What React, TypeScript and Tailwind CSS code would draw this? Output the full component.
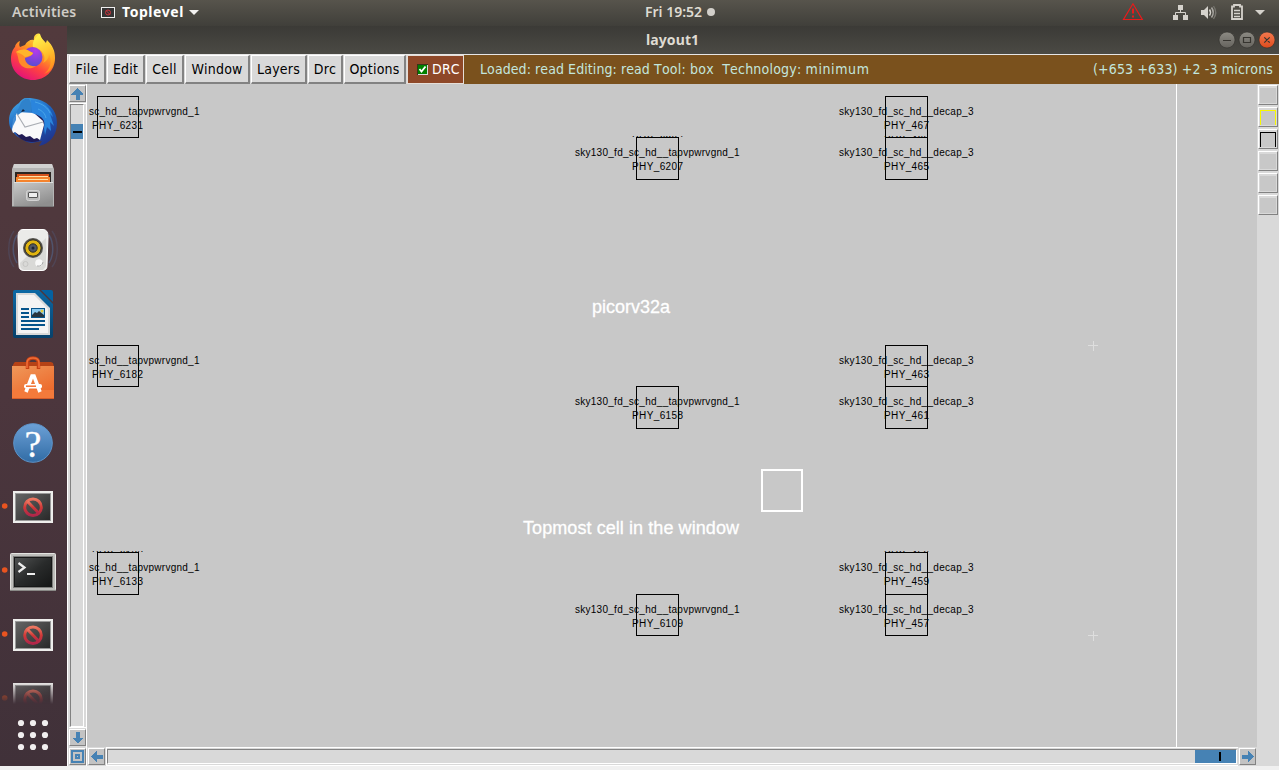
import React from "react";

type Cell = { x: number; y: number; h?: number; name: string; id: string; nameX: number; idX: number; nameW: number };

const TAP = "sky130_fd_sc_hd__tapvpwrvgnd_1";
const DECAP = "sky130_fd_sc_hd__decap_3";

const tap = (y: number, id: string, h = 42): Cell => ({ x: 636, y, h, name: TAP, id, nameX: 575, idX: 632, nameW: 164.5 });
const edge = (y: number, id: string, h = 41): Cell => ({ x: 97, y, h, name: "sc_hd__tapvpwrvgnd_1", id, nameX: 89, idX: 92, nameW: 110.5 });
const decap = (y: number, id: string, h = 41): Cell => ({ x: 885, y, h, name: DECAP, id, nameX: 839, idX: 884, nameW: 134.5 });

const cells: Cell[] = [
  edge(96, "PHY_6231"),
  edge(345, "PHY_6182"),
  edge(552, "PHY_6133", 42),
  tap(137, "PHY_6207"),
  tap(386, "PHY_6158"),
  tap(594, "PHY_6109", 41),
  decap(96, "PHY_467"),
  decap(137, "PHY_465", 42),
  decap(345, "PHY_463"),
  decap(386, "PHY_461", 42),
  decap(552, "PHY_459", 42),
  decap(594, "PHY_457"),
];

const clipped = [
  { x: 632, y: 136, w: 51, id: "PHY_6207" },
  { x: 884, y: 136, w: 45, id: "PHY_465" },
  { x: 92, y: 551, w: 51, id: "PHY_6133" },
  { x: 884, y: 551, w: 45, id: "PHY_459" },
];

function LayoutCanvas() {
  return (
    <svg className="block h-[663px] w-[1170px] bg-[#c8c8c8]" viewBox="87 84 1170 663">
      <g shapeRendering="crispEdges" fill="none" stroke="#000">
        {cells.map((c, i) => (
          <rect key={i} x={c.x + 0.5} y={c.y + 0.5} width={c.x === 97 ? 41 : 42} height={c.h} />
        ))}
      </g>
      <g fontFamily="Liberation Sans, Arial, sans-serif" fontSize="10" fill="#000">
        {cells.map((c, i) => (
          <React.Fragment key={i}>
            <text x={c.nameX} y={c.y + 19} textLength={c.nameW}>{c.name}</text>
            <text x={c.idX} y={c.y + 33} textLength={c.id.length === 8 ? 51 : 45}>{c.id}</text>
          </React.Fragment>
        ))}
        {clipped.map((c, i) => (
          <svg key={i} x={c.x} y={c.y} width={c.w} height="1">
            <text x="0" y="7" textLength={c.w}>{c.id}</text>
          </svg>
        ))}
      </g>
      <g shapeRendering="crispEdges">
        <rect x="1176" y="84" width="1" height="663" fill="#fff" />
        <rect x="762" y="470" width="40" height="41" fill="none" stroke="#fff" strokeWidth="2" />
        <path d="M1088 345.5h10M1093.5 341v10M1088 635.5h10M1093.5 631v10" stroke="#dedede" />
      </g>
      <g fontFamily="Liberation Sans, Arial, sans-serif" fontSize="18" fill="#fff" stroke="#fff" strokeWidth=".3">
        <text x="592" y="313" textLength="78">picorv32a</text>
        <text x="523" y="534" textLength="216">Topmost cell in the window</text>
      </g>
    </svg>
  );
}

const iconClass = "block h-16 w-[67px] shrink-0";

function Firefox() {
  return (
    <svg className={iconClass} viewBox="0 0 67 64">
      <defs>
        <linearGradient id="ffBody" x1=".8" y1=".1" x2=".3" y2="1">
          <stop offset="0" stopColor="#ffe645" /><stop offset=".35" stopColor="#ff9a22" />
          <stop offset=".65" stopColor="#ff4340" /><stop offset="1" stopColor="#e3107b" />
        </linearGradient>
        <linearGradient id="ffTail" x1=".3" y1="0" x2=".6" y2="1">
          <stop offset="0" stopColor="#fff44f" /><stop offset=".5" stopColor="#ffc52e" /><stop offset="1" stopColor="#ff8a1b" />
        </linearGradient>
        <radialGradient id="ffGlobe" cx=".65" cy=".2" r=".9">
          <stop offset="0" stopColor="#b33bea" /><stop offset=".5" stopColor="#8043da" /><stop offset="1" stopColor="#4a52cc" />
        </radialGradient>
      </defs>
      <path d="M20 15c-1 3-1 4 0 6l5-2c2-4 6-6 9-5-1-3 2-8 6-6 0 3 2 5 6 9l1-3c6 6 8 11 8 18 0 13-10 22-22 22S11 45 11 33c0-6 2-10 4-12 0-2 2-5 5-6Z" fill="url(#ffBody)" />
      <path d="M40 8c-5 3-8 8-7 13 10 2 14 10 10 16 4-2 6-5 6-9 4 7 1 16-5 20 9-3 11-12 10-20-1-5-3-9-7-13l-1 4c-1-4-5-6-6-11Z" fill="url(#ffTail)" />
      <circle cx="32.500" cy="31" r="10" fill="url(#ffGlobe)" />
      <path d="M16 26c5-3 10-3 13-1l4 2c-1 3-5 4-8 5 0 5 5 9 11 8-5 4-14 3-17-4-1-4-1-7-3-10Z" fill="#ff8a2a" />
      <path d="M16 26c5-3 10-3 13-1l4 2c-1 3-5 3-8 4-3-3-6-4-9-5Z" fill="#ffb52b" />
    </svg>
  );
}

function Thunderbird() {
  return (
    <svg className={iconClass} viewBox="0 0 67 64">
      <defs>
        <linearGradient id="tbBody" x1=".2" y1="0" x2=".8" y2="1">
          <stop offset="0" stopColor="#41a6e8" /><stop offset=".45" stopColor="#1c62bd" /><stop offset="1" stopColor="#203088" />
        </linearGradient>
      </defs>
      <path d="M27 8c18 0 30 10 30 25 0 13-8 21-18 23l3-5-10 2c-5 0-10-4-14-6C13 43 9 38 9 31c0-9 4-14 10-18 2-3 4-5 8-5Z" fill="url(#tbBody)" />
      <path d="M18 23c-6 9-6 16 0 23 5 6 13 7 21 5l5-14 1-13Z" fill="#211b55" />
      <path d="m17 22 17 1 9 8 1 4-4 15-3-2-3 1-4-3-4 1-4-3-3 1-4-3-2 1-1-3c1-7 2-12 5-17Z" fill="#f9f9fa" />
      <path d="m17 24 8 13 18-5" fill="none" stroke="#a9adb3" strokeWidth="1.1" />
      <path d="M19 18c2-8 6-10 10-9 3 5 3 9 2 13-5-3-8-1-13 3-2-2-1-5 1-7Z" fill="#2f82cb" />
      <path d="M31 10c13 1 20 8 22 17l-3-3 4 12-4-4 1 9-4-4-2 8-1-7c2-7-1-12-12-15Z" fill="#2a85dd" />
      <path d="M35 12c8 2 13 6 15 11M38 19c5 2 7 5 8 9" stroke="#5db9ef" fill="none" opacity=".6" />
      <path d="m21 22 2-3 2 2Z" fill="#142039" /><path d="m16 25-3 4-1 9 4-8Z" fill="#438dd4" />
    </svg>
  );
}

function Files() {
  return (
    <svg className={iconClass} viewBox="0 0 67 64">
      <defs><linearGradient id="cab" x1="0" y1="0" x2=".5" y2="1"><stop stopColor="#c9c9c9" /><stop offset="1" stopColor="#8f8f8f" /></linearGradient></defs>
      <path d="M14 10h38l2 5v37H12V15Z" fill="#b5b5b5" />
      <path d="M14 10h38l1 4H13Z" fill="#d1d1d1" />
      <path d="M15 18h36v10H15Z" fill="#2c2522" />
      <path d="M17 20h32v8H17Z" fill="#d4521c" /><path d="M16 23h34v5H16Z" fill="#f5832d" /><path d="M19 22.5h29M18 25.5h30" stroke="#ffe0a8" />
      <path d="M14 28h39v25H14Z" fill="url(#cab)" />
      <path d="M14 28.5h39" stroke="#ddd" />
      <rect x="26.5" y="36.5" width="13" height="10" rx="2" fill="#bababa" stroke="#d4d4d4" />
      <rect x="28.5" y="38.5" width="9" height="5" rx=".5" fill="#eee" stroke="#555" />
      <path d="M12 52.5h42" stroke="#777" />
    </svg>
  );
}

function Rhythmbox() {
  return (
    <svg className={iconClass} viewBox="0 0 67 64">
      <g fill="none" stroke="#52658c" strokeWidth="1.5">
        <path d="M14 13c-7 9-7 27 0 36" opacity=".3" /><path d="M17 17c-5 8-5 20 0 28" opacity=".6" />
        <path d="M52 13c7 9 7 27 0 36" opacity=".3" /><path d="M49 17c5 8 5 20 0 28" opacity=".6" />
      </g>
      <path d="M23 11.5h20q5 0 5 7l-1 29q0 5-5 5H24q-5 0-5-5l-1-29q0-7 5-7Z" fill="#ebebe9" stroke="#fff" />
      <path d="m20 45 26-25v28l-3 4H24q-4-1-4-7Z" fill="#d9d9d7" />
      <circle cx="33" cy="30" r="10" fill="#55534e" /><circle cx="33" cy="30" r="8.200" fill="#e0b410" stroke="#2b2b2a" />
      <circle cx="33" cy="30" r="4.200" fill="#525863" stroke="#302f24" /><circle cx="33" cy="30" r="1.500" fill="#1c2532" />
      <circle cx="39" cy="45" r="3.800" fill="#f8f8f8" /><path d="M37 48q5 1 6-4" stroke="#aaa" fill="none" />
      <circle cx="25.500" cy="46" r="2.500" fill="none" stroke="#c5c5c3" />
    </svg>
  );
}

function Writer() {
  return (
    <svg className={iconClass} viewBox="0 0 67 64">
      <defs><linearGradient id="wr" x1="0" y1="0" x2="0" y2="1"><stop stopColor="#0d69a5" /><stop offset="1" stopColor="#07416b" /></linearGradient></defs>
      <path d="M15 8h24l14 14v32q0 2-2 2H15q-2 0-2-2V10q0-2 2-2Z" fill="url(#wr)" />
      <path d="M41 8h10q2 0 2 2v10Z" fill="#0561a0" />
      <path d="M16 11h19l15 15v27H16Z" fill="#d9d9d9" /><path d="M18 13h16l14 14v24H18Z" fill="#f4f4f4" />
      <path d="M21 27h8M21 31h8M21 35h8M21 39h24M21 43h24M21 47h18" stroke="#06548b" strokeWidth="2" />
      <rect x="31" y="26" width="14" height="10" fill="#06548b" /><rect x="32" y="27" width="12" height="8" fill="#8bc9ef" />
      <path d="m32 33 3-3 2 1 2-2 5 4v2H32Z" fill="#26343f" /><circle cx="42" cy="29" r="1.500" fill="#e2c93c" />
    </svg>
  );
}

function Software() {
  return (
    <svg className={iconClass} viewBox="0 0 67 64">
      <defs><linearGradient id="bag" x1="0" y1="0" x2=".6" y2="1"><stop stopColor="#ef985a" /><stop offset="1" stopColor="#ed682a" /></linearGradient></defs>
      <path d="m14 17 1-1h36l2 1 1 4H12Z" fill="#b54216" /><path d="M12 20h42v33H12Z" fill="url(#bag)" />
      <path d="M12 44h42v9H12Z" fill="#f47a3b" /><path d="M12 52.500h42" stroke="#d65c29" />
      <path d="M27.500 23v-6q0-5 5.500-5t5.500 5v6" fill="none" stroke="#c74114" strokeWidth="3.500" />
      <path d="M27 22v-5q0-5 6-5t6 5v5" fill="none" stroke="#f06e38" strokeWidth="1.500" />
      <path d="m26 46 6-16h2l6 16" fill="none" stroke="#fff" strokeWidth="3.600" />
      <rect x="24" y="38" width="18" height="4.500" rx="2" fill="#fff" /><path d="M26 40.200h10" stroke="#f47131" strokeWidth="1.500" />
    </svg>
  );
}

function Help() {
  return (
    <svg className={iconClass} viewBox="0 0 67 64">
      <defs><linearGradient id="hp" x1="0" y1="0" x2="0" y2="1"><stop stopColor="#6ca0d6" /><stop offset="1" stopColor="#316ca5" /></linearGradient></defs>
      <circle cx="33" cy="33" r="19.300" fill="url(#hp)" stroke="#5d94ca" />
      <text x="33" y="46.500" textAnchor="middle" fontFamily="Liberation Serif, serif" fontSize="38" fontWeight="400" fill="#fff" stroke="#fff" strokeWidth=".3">?</text>
    </svg>
  );
}

function Dot() {
  return <circle cx="4.700" cy="32" r="2.800" fill="#e95420" />;
}

function Missing({ fade = false }: { fade?: boolean }) {
  return (
    <svg className={fade ? "block h-16 w-[67px] shrink-0 [mask-image:linear-gradient(to_bottom,black_16px,transparent_38px)]" : iconClass} viewBox="0 0 67 64">
      <defs>
        <linearGradient id="scr" x1="0" y1="0" x2="1" y2="1"><stop stopColor="#646464" /><stop offset="1" stopColor="#292929" /></linearGradient>
        <linearGradient id="ban" x1="0" y1="0" x2="0" y2="1"><stop stopColor="#ed7862" /><stop offset=".5" stopColor="#d13a38" /><stop offset="1" stopColor="#b0264a" /></linearGradient>
      </defs>
      <Dot />
      <rect x="13" y="17" width="40" height="32" fill="#eeeeec" /><rect x="15" y="19" width="36" height="28" fill="#999" />
      <rect x="16" y="20" width="34" height="26" fill="url(#scr)" />
      <g fill="none" stroke="url(#ban)" strokeWidth="3"><circle cx="33" cy="33.300" r="8.300" /><path d="m27.500 27.500 11.300 11.800" /></g>
    </svg>
  );
}

function Terminal() {
  return (
    <svg className={iconClass} viewBox="0 0 67 64">
      <defs><linearGradient id="term" x1="0" y1="0" x2="1" y2="1"><stop stopColor="#505252" /><stop offset=".5" stopColor="#292b2b" /><stop offset="1" stopColor="#151616" /></linearGradient></defs>
      <Dot />
      <rect x="10.500" y="15.500" width="45" height="37" rx="1" fill="#bdbdba" stroke="#e4e4e1" />
      <path d="M10 52.500h46" stroke="#898986" /><rect x="13" y="18" width="40" height="32" fill="#7d7d7b" />
      <rect x="14.500" y="19.500" width="37" height="29" fill="url(#term)" stroke="#171818" />
      <path d="m18.500 25 6 4.500-6 4.500" fill="none" stroke="#eee" strokeWidth="2.200" /><path d="M27 36h8" stroke="#eee" strokeWidth="2" />
    </svg>
  );
}

function Dock() {
  return (
    <nav className="flex h-[740px] w-[67px] shrink-0 flex-col bg-linear-to-b from-[#523a3d] via-[#4c363d] to-[#403139]">
      <Firefox /><Thunderbird /><Files /><Rhythmbox /><Writer /><Software /><Help /><Missing /><Terminal /><Missing />
      <div className="h-[38px] shrink-0 overflow-hidden"><Missing fade /></div>
      <svg className="block h-[62px] w-[67px] shrink-0" viewBox="0 704 67 62">
        {[723, 735, 747].map((y) => [21, 33, 45].map((x) => <circle key={x + "-" + y} cx={x} cy={y} r="3.100" fill="#f1efef" />))}
      </svg>
    </nav>
  );
}

function TopBar() {
  return (
    <header className="flex h-[26px] bg-linear-to-b from-[#57544c] to-[#403f3a] font-['Noto_Sans','Open_Sans',sans-serif] text-[14px] leading-[24px] text-[#dfdbd2]">
      <div className="flex w-[645px]">
        <span className="w-[89px] pl-3 font-semibold tracking-[0.2px] text-[#cfccc6]">Activities</span>
        <svg className="mt-1.5 ml-3 h-[14px] w-[14px]" viewBox="0 0 14 14">
          <rect x=".5" y="1.500" width="13" height="10" fill="#343434" stroke="#eee" /><circle cx="7" cy="6.500" r="2.500" stroke="#ce343d" fill="none" /><path d="m5.200 4.700 3.600 3.600" stroke="#ce343d" />
        </svg>
        <span className="ml-[7px] w-[62px] font-bold tracking-[0.55px] text-white">Toplevel</span>
        <svg className="mt-[9px] ml-1 h-2 w-[12px]" viewBox="0 0 12 8"><path d="M1 1h10L6 6Z" fill="#f2f1ef" /></svg>
      </div>
      <div className="flex w-[475px]">
        <span className="w-[58px] font-semibold">Fri 19:52</span>
        <span className="mt-2 ml-1 size-2 rounded-full bg-[#d2cfca]" />
      </div>
      <svg className="h-[26px] w-[159px]" viewBox="1120 0 159 26">
        <path d="M1132.900 3.800 1142.300 19.500h-18.800Z" fill="none" stroke="#e81b1b" strokeWidth="1.200" /><path d="M1133 8.500v5M1133 15.500v2" stroke="#e81b1b" strokeWidth="2" />
        <g fill="#d5d2cc">
          <path d="M1178 5h5v5h-5ZM1173 15h5v5h-5ZM1183 15h5v5h-5Z" /><path d="M1180.500 10v3M1175.500 16v-3.500h10v3.500" fill="none" stroke="#d5d2cc" />
          <path d="M1201 10h3l4-4v13l-4-4h-3Z" />
          <path d="M1255 10h10l-5 5Z" />
        </g>
        <path d="M1209.500 9.500q2 3 0 6" fill="none" stroke="#d5d2cc" strokeWidth="1.500" />
        <path d="M1211.500 7.500q3.500 5 0 10" fill="none" stroke="#aaa8a3" strokeWidth="1.500" />
        <path d="M1213.500 6q4.500 6.500 0 13" fill="none" stroke="#77756f" strokeWidth="1.300" />
        <path d="M1232 6.500h2v-1.500h6v1.500h2v12.500h-10Z" fill="none" stroke="#d5d2cc" strokeWidth="1.800" />
        <path d="M1234 10.500h6M1234 13.500h6M1234 16.500h6" stroke="#d5d2cc" strokeWidth="1.500" />
      </svg>
    </header>
  );
}

function TitleBar() {
  return (
    <div className="flex h-7 items-center bg-linear-to-b from-[#3b3a36] to-[#4b4a44] font-['Noto_Sans','Open_Sans',sans-serif] text-[14px] text-[#dfdbd2]">
      <span className="w-[1151px] pl-[579px] font-bold leading-7 tracking-[0.1px]">layout1</span>
      <svg className="h-7 w-[61px]" viewBox="1218 26 61 28">
        <defs><linearGradient id="wb" x1="0" y1="0" x2="0" y2="1"><stop stopColor="#8d8b84" /><stop offset="1" stopColor="#65635d" /></linearGradient>
          <linearGradient id="wc" x1="0" y1="0" x2="0" y2="1"><stop stopColor="#f3794f" /><stop offset="1" stopColor="#df4b1c" /></linearGradient></defs>
        <g stroke="#302f2b" strokeWidth=".6"><circle cx="1227" cy="40" r="8" fill="url(#wb)" /><circle cx="1247" cy="40" r="8" fill="url(#wb)" /><circle cx="1267" cy="40" r="8" fill="url(#wc)" /></g>
        <path d="M1223 40.500h8M1243.500 37.500h7v5h-7ZM1264.300 37.300l5.400 5.400M1269.700 37.300l-5.400 5.400" fill="none" stroke="#36342f" strokeWidth="1.200" />
      </svg>
    </div>
  );
}

function MenuButton({ label, width }: { label: string; width: string }) {
  return (
    <div className={`${width} mr-px flex h-[29px] shrink-0 items-center justify-center border-t border-r-2 border-b-2 border-l border-t-white border-r-[#828282] border-b-[#828282] border-l-white bg-[#d9d9d9] pt-px text-black`}>
      {label}
    </div>
  );
}

function MenuBar() {
  return (
    <div className="flex h-[30px] border-t border-[#e6e6e6] bg-[#7a511d] font-['DejaVu_Sans_Condensed','DejaVu_Sans',sans-serif] text-[14px] tracking-[0.2px] [font-kerning:none] [font-stretch:condensed]">
      <div className="flex h-[29px] shrink-0 bg-[#d9d9d9] pl-0.5 shadow-[inset_1px_0_#f2f2f2]">
        <MenuButton label="File" width="w-[37px]" />
        <MenuButton label="Edit" width="w-[38px]" />
        <MenuButton label="Cell" width="w-[38px]" />
        <MenuButton label="Window" width="w-[65px]" />
        <MenuButton label="Layers" width="w-[56px]" />
        <MenuButton label="Drc" width="w-[35px]" />
        <MenuButton label="Options" width="w-[62px]" />
      </div>
      <div className="flex h-[29px] w-[57px] shrink-0 items-center border border-[#e5ded8] bg-[#8e4828] pl-[9px] text-white">
        <svg className="mr-1 h-[11px] w-[11px] shrink-0" viewBox="0 0 11 11">
          <path d="M0 0h11v11H0Z" fill="#d9d9d9" /><path d="M0 0h11v1H1v10H0Z" fill="#39351a" /><path d="M1 1h9v9H1Z" fill="#008000" /><path d="m2.500 5 2 2.500 4-5" fill="none" stroke="#fff" strokeWidth="1.800" />
        </svg>
        <span>DRC</span>
      </div>
      <div className="flex flex-1 items-center justify-between pr-[6px] pl-4 whitespace-pre text-[#c3e6dd]">
        <span className="tracking-[0.08px]">
          Loaded: read Editing: read <span className="tracking-[0.2px]">Tool: box  Technology: </span><span className="tracking-[0.6px]">minimum</span>
        </span>
        <span className="tracking-[0.15px]">(+653 +633) +2 -3 microns</span>
      </div>
    </div>
  );
}

const arrows = {
  up: "M8 2 14 9h-4v5H6V9H2Z",
  down: "M8 14 2 8h4V2h4v6h4Z",
  left: "M2 8 8 2v4h6v4H8v4Z",
  right: "M14 8 8 2v4H2v4h6v4Z",
};

function ScrollButton({ kind }: { kind: "up" | "down" | "left" | "right" | "zoom" }) {
  return (
    <div className="size-[17px] shrink-0 border-t border-r border-b border-l border-t-white border-r-[#828282] border-b-[#828282] border-l-white bg-[#c3c3c3]">
      <svg className="block size-[15px]" viewBox="0.500 0.500 15 15" shapeRendering="crispEdges">
        {kind === "zoom" ? (
          <path d="M2.500 2.500h11v11h-11ZM6.500 6.500h3v3h-3Z" fill="none" stroke="#4682b4" strokeWidth="2" />
        ) : <path d={arrows[kind]} fill="#4682b4" />}
      </svg>
    </div>
  );
}

function VerticalScroll() {
  return (
    <div className="flex h-[682px] w-5 shrink-0 flex-col border-r border-l border-white bg-[#d9d9d9] pt-px pl-px">
      <ScrollButton kind="up" />
      <div className="mt-px flex h-[625px] w-[17px] flex-col border-t border-b border-[#fff]">
        <div className="mr-0.5 ml-px flex-1 border-t border-r border-b border-l border-t-[#828282] border-r-white border-b-white border-l-[#828282] pt-[19px]">
          <div className="flex h-[15px] items-center justify-center bg-[#4682b4]"><span className="h-0.5 w-[9px] bg-black" /></div>
        </div>
      </div>
      <div className="mt-px"><ScrollButton kind="down" /></div>
      <div className="mt-[2px]"><ScrollButton kind="zoom" /></div>
    </div>
  );
}

function HorizontalScroll() {
  return (
    <div className="flex h-[19px] w-[1170px] bg-[#d9d9d9]">
      <div className="pt-px pl-px"><ScrollButton kind="left" /></div>
      <div className="ml-px flex h-[19px] w-[1132px] border-t border-b border-l border-white pt-px pb-px">
        <div className="mr-px flex flex-1 justify-end border-t border-r border-b border-l border-t-[#828282] border-r-white border-b-white border-l-[#828282]">
          <div className="flex h-[13px] w-[41px] items-center bg-[#4682b4] pl-6"><span className="h-[9px] w-0.5 bg-black" /></div>
        </div>
      </div>
      <div className="pt-px pl-px"><ScrollButton kind="right" /></div>
    </div>
  );
}

function Swatch({ color }: { color: string }) {
  return (
    <div className="mb-0.5 size-5 shrink-0 border-t border-r border-b border-l border-t-white border-r-[#828282] border-b-[#828282] border-l-white bg-[#d9d9d9] pt-0.5 pl-px">
      <div className={`h-[15px] w-[16px] border-t border-r border-l ${color} bg-[#c8c8c8]`} />
    </div>
  );
}

function Palette() {
  return (
    <aside className="flex w-[22px] flex-col bg-[#d9d9d9] pt-px pl-px">
      <Swatch color="border-[#c8c8c8]" />
      <Swatch color="border-[#f8f800]" />
      <Swatch color="border-black" />
      <Swatch color="border-[#c8c8c8]" />
      <Swatch color="border-[#c8c8c8]" />
      <Swatch color="border-[#c8c8c8]" />
    </aside>
  );
}

export default function App() {
  return (
    <div className="h-[770px] w-[1279px] overflow-hidden bg-[#f0f0f0]">
      <TopBar />
      <div className="flex h-[740px]">
        <Dock />
        <main className="flex w-[1212px] flex-col">
          <TitleBar />
          <MenuBar />
          <div className="flex h-[682px]">
            <VerticalScroll />
            <div className="flex w-[1170px] flex-col"><LayoutCanvas /><HorizontalScroll /></div>
            <Palette />
          </div>
        </main>
      </div>
    </div>
  );
}
